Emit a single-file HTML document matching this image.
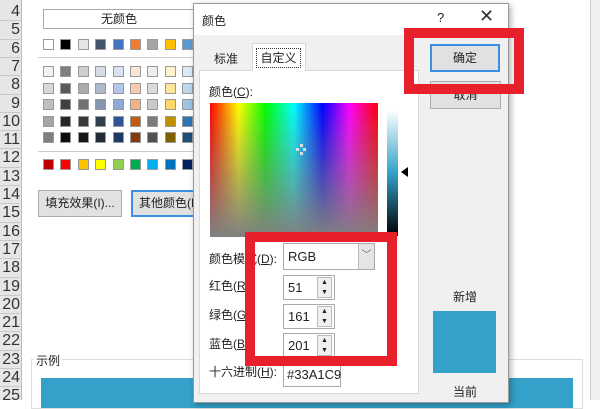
<!DOCTYPE html>
<html><head><meta charset="utf-8"><style>
*{margin:0;padding:0;box-sizing:border-box}
body{width:600px;height:400px;overflow:hidden;position:relative;background:#fff;font-family:"Liberation Sans","Noto Sans CJK SC",sans-serif;font-size:12px;color:#222;white-space:nowrap}
.a{position:absolute}
.rh{left:0;top:0;width:22px;height:400px;background:#e6e6e6;border-right:1px solid #bbb;overflow:hidden}
.rh div{position:absolute;right:1px;font-size:16px;color:#333;width:40px;text-align:right;height:18.4px;border-bottom:1px solid #c8c8c8;line-height:18px}
.sw{position:absolute;width:11px;height:11px;border:1px solid #999}
.btn{position:absolute;background:#e1e1e1;border:1px solid #adadad;text-align:center;overflow:hidden}
</style></head><body>
<div class="a rh" id="rh"></div>
<div class="a" style="left:22px;top:0;width:568px;height:400px;background:#fff"></div>
<div class="a" style="left:590px;top:0;width:10px;height:400px;background:#f0f0f0;border-left:1px solid #ccc"></div>
<div class="a" style="left:43px;top:9px;width:152px;height:20px;border:1px solid #aaa;text-align:center;line-height:18px;font-size:12px">无颜色</div>
<div id="sw"></div>
<div class="a" style="left:38px;top:57px;width:155px;height:1px;background:#ccc"></div>
<div class="a" style="left:38px;top:151px;width:155px;height:1px;background:#ccc"></div>
<div class="btn" style="left:38px;top:190px;width:84px;height:27px;line-height:25px">填充效果(I)...</div>
<div class="btn" style="left:131px;top:190px;width:70px;height:27px;line-height:23px;border:2px solid #3a8ee6;text-align:left;padding-left:6px">其他颜色(M)</div>
<div class="a" style="left:31px;top:359px;width:552px;height:50px;border:1px solid #ddd"></div>
<div class="a" style="left:34px;top:352px;background:#fff;padding:0 2px;font-size:12px">示例</div>
<div class="a" style="left:41px;top:378px;width:532px;height:30px;background:#33a1c9"></div>

<div class="a" style="left:193px;top:3px;width:316px;height:400px;background:#f0f0f0;border:1px solid #999;box-shadow:2px 2px 6px rgba(0,0,0,.3)"></div>
<div class="a" style="left:194px;top:4px;width:314px;height:31px;background:#fff"></div>
<div class="a" style="left:202px;top:12px;font-size:12px">颜色</div>
<div class="a" style="left:437px;top:10px;font-size:13px">?</div>
<div class="a" style="left:479px;top:6px;font-size:18px;color:#333">✕</div>
<div class="a" style="left:199px;top:70px;width:220px;height:324px;background:#fff;border:1px solid #d9d9d9"></div>
<div class="a" style="left:201px;top:48px;width:50px;height:22px;text-align:center;line-height:22px">标准</div>
<div class="a" style="left:252px;top:43px;width:54px;height:28px;background:#fff;border:1px solid #d9d9d9;border-bottom:none"></div>
<div class="a" style="left:256px;top:48px;width:45px;height:20px;border:1px dotted #333;text-align:center;line-height:18px">自定义</div>
<div class="a" style="left:209px;top:83px">颜色(<u>C</u>):</div>
<div class="a" style="left:210px;top:103px;width:168px;height:134px;background:linear-gradient(to bottom,rgba(128,128,128,0),rgba(128,128,128,1)),linear-gradient(to right,#f00,#ff0 17%,#0f0 33%,#0ff 50%,#00f 67%,#f0f 83%,#f00)"></div>
<div class="a" style="left:296px;top:148px;width:3px;height:3px;background:#ddd"></div>
<div class="a" style="left:303px;top:148px;width:3px;height:3px;background:#ddd"></div>
<div class="a" style="left:300px;top:144px;width:3px;height:3px;background:#ddd"></div>
<div class="a" style="left:300px;top:152px;width:3px;height:3px;background:#ddd"></div>
<div class="a" style="left:387px;top:110px;width:11px;height:126px;background:linear-gradient(#fff,#33a1c9 50%,#000)"></div>
<div class="a" style="left:401px;top:167px;width:0;height:0;border-top:5px solid transparent;border-bottom:5px solid transparent;border-right:7px solid #000"></div>
<div class="a" style="left:209px;top:250px">颜色模式(<u>D</u>):</div>
<div class="a" style="left:209px;top:277px">红色(<u>R</u>):</div>
<div class="a" style="left:209px;top:306px">绿色(<u>G</u>):</div>
<div class="a" style="left:209px;top:335px">蓝色(<u>B</u>):</div>
<div class="a" style="left:209px;top:363px">十六进制(<u>H</u>):</div>
<div class="a" style="left:283px;top:243px;width:92px;height:27px;background:#fff;border:1px solid #aaa;padding:5px 4px;font-size:13px">RGB</div>
<div class="a" style="left:358px;top:244px;width:16px;height:25px;background:#e5e5e5;border-left:1px solid #bbb;text-align:center;line-height:24px;color:#666;font-size:10px">﹀</div>
<div id="sp"></div>
<div class="a" style="left:283px;top:362px;width:58px;height:25px;background:#fff;border:1px solid #aaa;padding:4px 3px;font-size:13px">#33A1C9</div>
<div class="a" style="left:245px;top:232px;width:152px;height:134px;border:10px solid #e8202b"></div>
<div class="btn" style="left:430px;top:44px;width:70px;height:28px;line-height:24px;border:2px solid #3a8ee6">确定</div>
<div class="btn" style="left:430px;top:81px;width:71px;height:28px;line-height:26px">取消</div>
<div class="a" style="left:404px;top:28px;width:120px;height:66px;border:10px solid #e8202b"></div>
<div class="a" style="left:453px;top:288px;font-size:12px">新增</div>
<div class="a" style="left:433px;top:311px;width:63px;height:62px;background:#33a1c9"></div>
<div class="a" style="left:453px;top:383px;font-size:12px">当前</div>
<script>
var h='';for(var i=0;i<22;i++){h+='<div style="top:'+(i*18.3+3)+'px">'+(i+4)+'</div>'}document.getElementById('rh').innerHTML=h;
var rows=[[39,['#fff','#000','#e7e6e6','#44546a','#4472c4','#ed7d31','#a5a5a5','#ffc000','#5b9bd5']],
[66,['#f2f2f2','#7f7f7f','#d0cece','#d6dce4','#d9e2f3','#fbe5d5','#ededed','#fff2cc','#deebf6']],
[83,['#d8d8d8','#595959','#aeabab','#adb9ca','#b4c6e7','#f7cbac','#dbdbdb','#fee599','#bdd7ee']],
[99,['#bfbfbf','#3f3f3f','#757070','#8496b0','#8eaadb','#f4b183','#c9c9c9','#ffd965','#9dc3e6']],
[116,['#a5a5a5','#262626','#3a3838','#323f4f','#2f5496','#c55a11','#7b7b7b','#bf9000','#2e75b5']],
[132,['#7f7f7f','#0c0c0c','#171616','#222a35','#1f3864','#833c0b','#525252','#7f6000','#1e4e79']],
[159,['#c00000','#f00','#ffc000','#ff0','#92d050','#00b050','#00b0f0','#0070c0','#002060']]];
var s='';rows.forEach(function(r){r[1].forEach(function(c,j){s+='<div class="sw" style="left:'+(43+j*17.4)+'px;top:'+r[0]+'px;background:'+c+'"></div>'})});
document.getElementById('sw').innerHTML=s;
var p='',v=[51,161,201],t=[275,304,333];
for(var k=0;k<3;k++){p+='<div class="a" style="left:283px;top:'+t[k]+'px;width:52px;height:25px;background:#fff;border:1px solid #aaa;padding:4px 4px;font-size:13px">'+v[k]+'</div><div class="a" style="left:317px;top:'+(t[k]+2)+'px;width:15px;height:21px;background:#f0f0f0;border:1px solid #bbb;font-size:7px;text-align:center;line-height:10px;white-space:normal">▲<br>▼</div>'}
document.getElementById('sp').innerHTML=p;
</script>
</body></html>
